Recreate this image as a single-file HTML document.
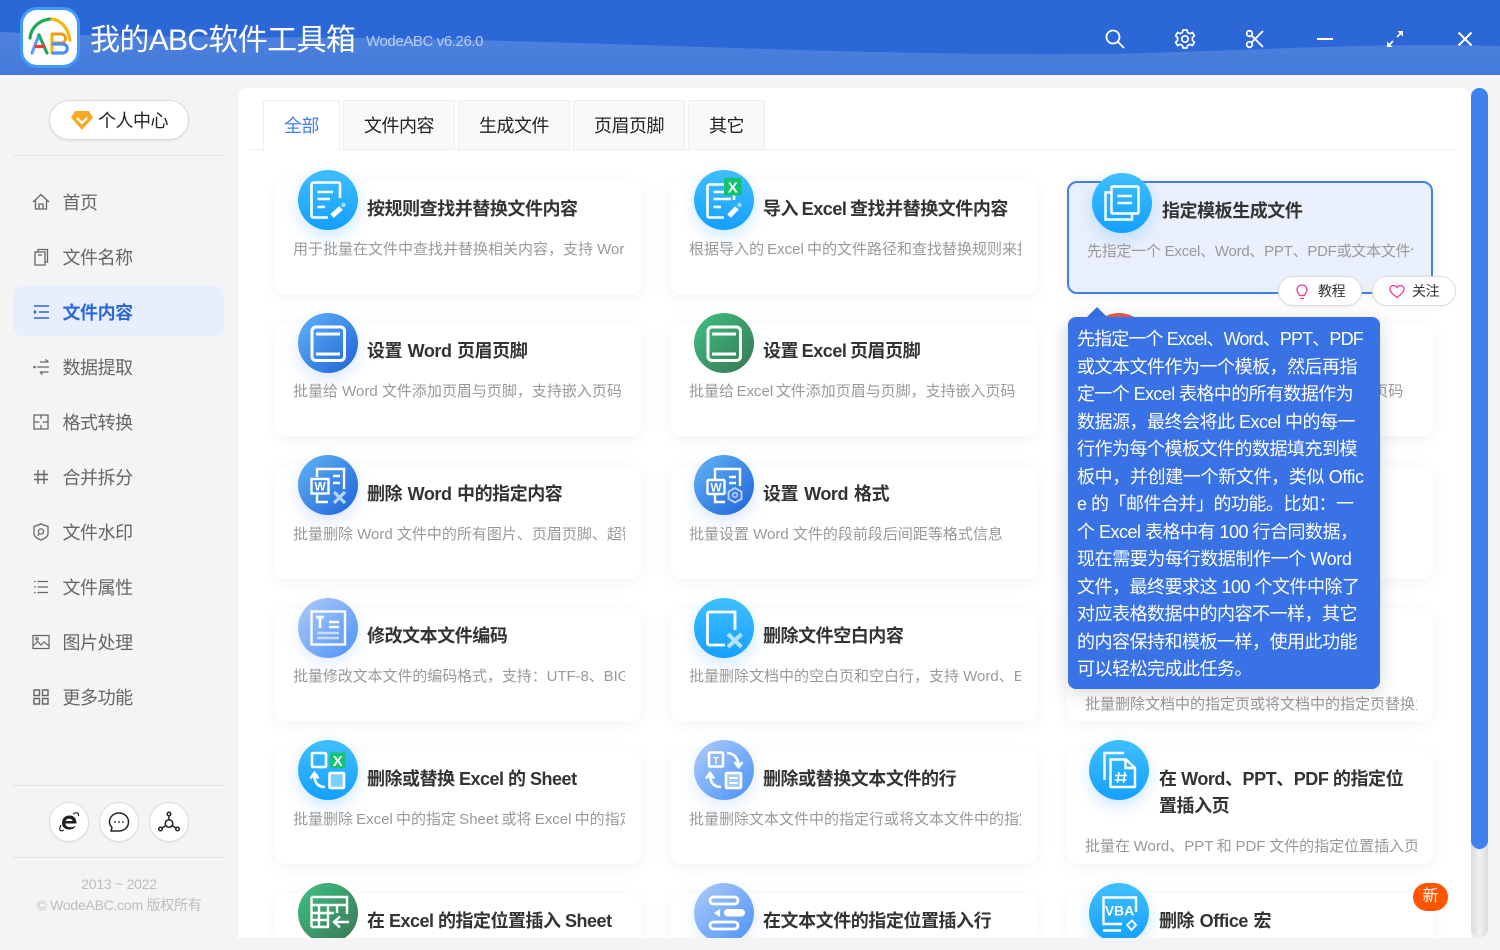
<!DOCTYPE html>
<html lang="zh-CN">
<head>
<meta charset="utf-8">
<title>我的ABC软件工具箱</title>
<style>
*{box-sizing:border-box;margin:0;padding:0}
html,body{width:1500px;height:950px;overflow:hidden;background:#f4f4f4;font-family:"Liberation Sans","Noto Sans CJK SC",sans-serif}
.hdr{position:absolute;left:0;top:0;width:1500px;height:75px;background:#2b67d7}
.hdr svg.wave{position:absolute;left:0;top:0}
.logo{position:absolute;left:20px;top:7px;width:60px;height:61px}
.apptitle{position:absolute;left:90px;top:19px;line-height:44px;font-size:30px;color:#fff;letter-spacing:-.65px;white-space:nowrap}
.ver{position:absolute;left:366px;top:32px;line-height:20px;font-size:15px;color:#b9cdf2;letter-spacing:-.4px;white-space:nowrap}
.wi{position:absolute;top:27px;width:24px;height:24px}
.pc{position:absolute;left:49px;top:100px;width:140px;height:40px;border:1px solid #ddd;border-radius:20px;background:#fff;box-shadow:0 1px 2px rgba(0,0,0,.08)}
.pc span{position:absolute;left:48px;top:1px;line-height:38px;font-size:18px;color:#222;letter-spacing:-.5px;white-space:nowrap}
.pc svg{position:absolute;left:20px;top:9px}
.hr{position:absolute;left:13px;width:212px;height:1px;background:#e3e3e3}
.vl{position:absolute;left:224px;top:170px;width:1px;height:553px;background:#f0f0f0}
.act{position:absolute;left:13px;top:286px;width:211px;height:50px;background:#e8effc;border-radius:10px}
.m{position:absolute;left:62.500px;line-height:28px;font-size:18px;color:#666;letter-spacing:-.45px;white-space:nowrap}
.m.on{color:#2b67d7;font-weight:700}
.mi{position:absolute;left:32px;width:18px;height:18px}
.cb{position:absolute;top:802px;width:40px;height:40px;border-radius:50%;background:#fff;border:1px solid #ddd;box-shadow:0 1px 2px rgba(0,0,0,.06)}
.cb svg{position:absolute;left:7px;top:7px}
.foot{position:absolute;left:0;width:238px;text-align:center;font-size:14px;line-height:20px;color:#bdbdbd;letter-spacing:-.25px;white-space:nowrap}
.panel{position:absolute;left:238px;top:88px;width:1233px;height:850px;background:#fff;border-radius:10px 10px 0 0;overflow:hidden}
.tab{position:absolute;top:12px;height:50px;background:#f9f9f9;border:1px solid #eee;border-bottom:0;text-align:center;line-height:50px;font-size:18px;color:#222;letter-spacing:-.5px;border-radius:2px 2px 0 0}
.tab.on{background:#fff;color:#3f80ef;height:51px;z-index:2}
.tline{position:absolute;left:12px;top:61px;width:1208px;height:1px;background:#eee}
.c{position:absolute;width:366px;height:113px;background:#fff;border-radius:10px;box-shadow:0 3px 16px rgba(0,0,0,.055)}
.ic{position:absolute;left:23px;top:-11px;width:60px;height:60px;border-radius:50%}
.ic svg{position:absolute;left:0;top:0}
.sky{background:linear-gradient(180deg,#40bfff,#14a0ff);box-shadow:0 6px 16px rgba(30,150,255,.22)}
.wd{background:linear-gradient(135deg,#62b4f6,#1e62d8);box-shadow:0 6px 16px rgba(40,110,230,.18)}
.gr{background:linear-gradient(135deg,#3dc283,#3a7652)}
.lb{background:linear-gradient(135deg,#aecbf8,#4a92fa);box-shadow:0 6px 16px rgba(70,140,250,.16)}
.t{position:absolute;left:92px;top:15px;width:260px;line-height:27px;font-size:18px;font-weight:700;color:#333;letter-spacing:-.45px;white-space:nowrap}
.d{position:absolute;left:18px;top:58px;width:332px;height:22px;line-height:22px;font-size:15px;color:#999;overflow:hidden;white-space:nowrap}
.e{height:112px}
.e .t{top:14px}
.e .d{top:57px}
.last{height:44px;border-radius:10px 10px 0 0}
.last .t{top:14px}
.sel{background:#e9f0fc;border:2px solid #3f80ef}
.sel .ic{left:23px;top:-10px}
.sel .t{left:93px;top:15px}
.sel .d{left:18px;top:58px;width:326px;letter-spacing:-.25px}
.btn{position:absolute;top:276px;width:84px;height:30px;border:1px solid #ddd;border-radius:15px;background:#fff;font-size:14px;line-height:28px;color:#333;letter-spacing:-.4px;box-shadow:0 1px 2px rgba(0,0,0,.05)}
.btn span{position:absolute;left:39px;top:0}
.btn svg{position:absolute;left:16px;top:7px}
.tip{position:absolute;left:830px;top:229px;width:312px;height:372px;background:#3872e4;border-radius:8px;color:#fff;font-size:18px;line-height:27.5px;letter-spacing:-.5px;padding:9px 9px 0;box-shadow:0 4px 20px rgba(0,0,0,.16);z-index:5}
.tip div{white-space:nowrap}
.arr{position:absolute;left:849px;top:219px;width:0;height:0;border-left:10px solid transparent;border-right:10px solid transparent;border-bottom:10px solid #3872e4;z-index:5}
.new{position:absolute;left:1175px;top:795px;width:35px;height:28px;border-radius:14px;background:#ff5500;color:#fff;font-size:16px;line-height:28px;text-align:center;z-index:6}
.track{position:absolute;left:1471px;top:88px;width:17px;height:850px;border-radius:9px;background:linear-gradient(90deg,#dcdcdc,#f0f0f0 50%,#dcdcdc)}
.thumb{position:absolute;left:1471px;top:88px;width:17px;height:761px;border-radius:9px;background:#3f80ef}
</style>
</head>
<body>

<div class="hdr">
<svg class="wave" width="1500" height="75" viewBox="0 0 1500 75"><defs><linearGradient id="wv" x1="0" y1="0" x2="0" y2="1"><stop offset="0" stop-color="#4f82dd"/><stop offset="1" stop-color="#4479da"/></linearGradient></defs><path d="M0 32C120 38 260 36 420 39C640 43 880 56 1090 54C1240 52 1360 42 1500 46V75H0Z" fill="url(#wv)"/></svg>
<svg class="logo" viewBox="0 0 60 61" fill="none" stroke-linecap="round"><rect x="0" y="0" width="60" height="61" rx="17" fill="#3f9bff"/><rect x="3" y="3" width="54" height="55" rx="14" fill="#fdfdff"/><path d="M10 31C11 20 20 13 30 12" stroke="#1ea85a" stroke-width="3.2"/><path d="M32 12C41 13 48 21 50 33" stroke="#f6b60d" stroke-width="3.2"/><path d="M12 46L19 28" stroke="#5aa0f5" stroke-width="3.2"/><path d="M19 28L27 46" stroke="#1ea85a" stroke-width="3.2"/><path d="M16 39.500H24" stroke="#ef3b36" stroke-width="3.200"/><path d="M32 27V46" stroke="#f6b60d" stroke-width="3.200"/><path d="M33 27H41C47 27 47 36 41 36H33" stroke="#f09a1a" stroke-width="3"/><path d="M33 37H42C49 37 49 46 42 46H33" stroke="#4d90f5" stroke-width="3.200"/></svg>
<div class="apptitle">我的ABC软件工具箱</div>
<div class="ver">WodeABC v6.26.0</div>
<svg class="wi" style="left:1103px" viewBox="0 0 24 24" fill="none" stroke="#fff" stroke-width="1.800"><circle cx="10" cy="10" r="6.500"/><path d="M15 15L21 21"/></svg>
<svg class="wi" style="left:1173px" viewBox="0 0 24 24" fill="none" stroke="#fff" stroke-width="1.700"><path d="M10 3h4l.7 2.600 2.300 1 2.400-1.200 2 3.400-2 1.800v2.800l2 1.800-2 3.400-2.400-1.200-2.300 1L14 21h-4l-.7-2.600-2.300-1-2.400 1.200-2-3.400 2-1.800v-2.800l-2-1.800 2-3.400L7 6.600l2.300-1z" stroke-linejoin="round"/><circle cx="12" cy="12" r="3.200"/></svg>
<svg class="wi" style="left:1243px" viewBox="0 0 24 24" fill="none" stroke="#fff" stroke-width="1.800"><circle cx="6.500" cy="6.500" r="2.800"/><circle cx="6.500" cy="17.500" r="2.800"/><path d="M8.500 8.500L20 20M8.500 15.500L20 4"/></svg>
<svg class="wi" style="left:1313px" viewBox="0 0 24 24" fill="none" stroke="#fff" stroke-width="2"><path d="M4 12H20"/></svg>
<svg class="wi" style="left:1383px" viewBox="0 0 24 24" fill="none" stroke="#fff" stroke-width="1.800"><path d="M6 18L10 14M14 10L18 6"/><path d="M4 20V14.500L9.500 20Z" fill="#fff" stroke="none"/><path d="M20 4V9.500L14.500 4Z" fill="#fff" stroke="none"/></svg>
<svg class="wi" style="left:1453px" viewBox="0 0 24 24" fill="none" stroke="#fff" stroke-width="2"><path d="M5.500 5.500L18.500 18.500M18.500 5.500L5.500 18.500"/></svg>
</div>

<div class="pc"><svg width="24" height="21" viewBox="0 0 24 21"><path d="M5 1H19L23 7.500L12 20L1 7.500Z" fill="#f9a825"/><path d="M7 8L12 13L17 8" fill="none" stroke="#fff" stroke-width="2.200"/></svg><span>个人中心</span></div>
<div class="hr" style="top:155px"></div>
<div class="vl"></div>
<div class="act"></div>

<svg class="mi" style="top:193px" viewBox="0 0 18 18" fill="none" stroke="#666" stroke-width="1.300"><path d="M1 9L9 1.500L17 9M3.500 7.500V16H14.500V7.500M7 16V11H11V16"/></svg>
<div class="m" style="top:188.500px">首页</div>
<svg class="mi" style="top:248px" viewBox="0 0 18 18" fill="none" stroke="#666" stroke-width="1.300"><path d="M3 4H13V17H3ZM6 4V1.500H15.500V14H13M6 7H10"/></svg>
<div class="m" style="top:243.500px">文件名称</div>
<svg class="mi" style="top:303px" viewBox="0 0 18 18" fill="none" stroke="#2b67d7" stroke-width="1.400"><path d="M2 3H17M7 9H17M2 15H17"/><path d="M2 6.500L5 9L2 11.500Z" fill="#2b67d7" stroke="none"/></svg>
<div class="m on" style="top:298.500px">文件内容</div>
<svg class="mi" style="top:358px" viewBox="0 0 18 18" fill="none" stroke="#666" stroke-width="1.300"><path d="M5 9H17M8 4H16.500M13.500 1.500L16.500 4M8 14H16.500M10.500 16.500L8 14"/><circle cx="2.500" cy="9" r="1.300" fill="#666" stroke="none"/></svg>
<div class="m" style="top:353.500px">数据提取</div>
<svg class="mi" style="top:413px" viewBox="0 0 18 18" fill="none" stroke="#666" stroke-width="1.300"><path d="M2 2H16V16H2ZM9 2V6M9 12V16M2 9H6M12 9H16M4.500 9H7.500M10.500 9H13.500"/></svg>
<div class="m" style="top:408.500px">格式转换</div>
<svg class="mi" style="top:468px" viewBox="0 0 18 18" fill="none" stroke="#666" stroke-width="1.400"><path d="M6 2V16M12 2V16M2 6.500H16M2 11.500H16"/></svg>
<div class="m" style="top:463.500px">合并拆分</div>
<svg class="mi" style="top:523px" viewBox="0 0 18 18" fill="none" stroke="#666" stroke-width="1.300"><path d="M9 1L16 3.500V11C16 13.500 12 16 9 17C6 16 2 13.500 2 11V3.500Z"/><circle cx="9" cy="8.500" r="2.600"/><path d="M7 11L5.500 12.500"/></svg>
<div class="m" style="top:518.500px">文件水印</div>
<svg class="mi" style="top:578px" viewBox="0 0 18 18" fill="none" stroke="#666" stroke-width="1.300"><path d="M5.500 3.500H16M5.500 9H16M5.500 14.500H16M2 3.500H3.500M2 9H3.500M2 14.500H3.500"/></svg>
<div class="m" style="top:573.500px">文件属性</div>
<svg class="mi" style="top:633px" viewBox="0 0 18 18" fill="none" stroke="#666" stroke-width="1.200"><path d="M1 2.500H17V15.500H1ZM1 13L5.500 8.500L9 12L12 9L17 13"/><circle cx="5" cy="5.800" r="1.200"/></svg>
<div class="m" style="top:628.500px">图片处理</div>
<svg class="mi" style="top:688px" viewBox="0 0 18 18" fill="none" stroke="#666" stroke-width="1.400"><path d="M2 2H7.500V7.500H2ZM10.500 2H16V7.500H10.500ZM2 10.500H7.500V16H2ZM10.500 10.500H16V16H10.500Z"/></svg>
<div class="m" style="top:683.500px">更多功能</div>

<div class="hr" style="top:785px"></div>
<div class="cb" style="left:49px"><svg width="24" height="24" viewBox="0 0 24 24" fill="none"><path d="M5 13C5 8.500 8 5.500 12.500 5.500C17 5.500 19.500 8.500 19.500 13.500H8.500C8.500 17 13 18.500 18.500 16C17.500 18.500 15 19.500 12 19.500C8 19.500 5 17 5 13ZM8.800 11H15.500C15.300 8 9 8 8.800 11Z" fill="#222"/><path d="M4 15C1.500 20 3 22 7 20M16 4C20 2 22 2.500 21.500 6" stroke="#222" stroke-width="1.200"/></svg></div>
<div class="cb" style="left:99px"><svg width="24" height="24" viewBox="0 0 24 24" fill="none" stroke="#222" stroke-width="1.500"><path d="M12 3C17.500 3 21.500 7 21.500 12C21.500 17 17.500 21 12 21H4L5 17.500C3.500 16 2.500 14 2.500 12C2.500 7 6.500 3 12 3Z" stroke-linejoin="round"/><circle cx="8" cy="12" r=".9" fill="#222" stroke="none"/><circle cx="12" cy="12" r=".9" fill="#222" stroke="none"/><circle cx="16" cy="12" r=".9" fill="#222" stroke="none"/></svg></div>
<div class="cb" style="left:149px"><svg width="24" height="24" viewBox="0 0 24 24" fill="none" stroke="#222" stroke-width="1.500"><circle cx="12" cy="13.500" r="3.800"/><circle cx="12" cy="4" r="1.800"/><circle cx="3.500" cy="19" r="1.800"/><circle cx="20.500" cy="19" r="1.800"/><path d="M12 6V9.700M5 18L8.800 15.500M19 18L15.200 15.500"/></svg></div>
<div class="hr" style="top:857px"></div>
<div class="foot" style="top:874px">2013 ~ 2022</div>
<div class="foot" style="top:895px">© WodeABC.com 版权所有</div>

<div class="panel">
<div class="tab on" style="left:25px;width:77px">全部</div>
<div class="tab" style="left:105px;width:112px">文件内容</div>
<div class="tab" style="left:220px;width:112px">生成文件</div>
<div class="tab" style="left:335px;width:112px">页眉页脚</div>
<div class="tab" style="left:450px;width:77px">其它</div>
<div class="tline"></div>

<!-- Column 1 -->
<div class="c" style="left:37px;top:93px">
<div class="ic sky"><svg width="60" height="60" viewBox="0 0 60 60" fill="none" stroke="#fff" stroke-width="2.600"><path d="M42 28V14.500a2 2 0 0 0-2-2H15.500a2 2 0 0 0-2 2V45.500a2 2 0 0 0 2 2H30"/><path d="M19.500 22H35M19.500 29H32M19.500 37H27"/><path d="M34 46L43 38" stroke-width="5"/><circle cx="45.500" cy="35" r="2.200" fill="#a8dcff" stroke="none"/></svg></div>
<div class="t">按规则查找并替换文件内容</div>
<div class="d">用于批量在文件中查找并替换相关内容，支持 Word、Excel、PPT</div>
</div>
<div class="c e" style="left:37px;top:236px">
<div class="ic wd"><svg width="60" height="60" viewBox="0 0 60 60" fill="none" stroke="#fff" stroke-width="3"><rect x="14" y="14" width="32.500" height="33.500" rx="4"/><path d="M18 21H42M18 41H42"/></svg></div>
<div class="t" style="word-spacing:1px">设置 Word 页眉页脚</div>
<div class="d">批量给 Word 文件添加页眉与页脚，支持嵌入页码</div>
</div>
<div class="c" style="left:37px;top:378px">
<div class="ic wd"><svg width="60" height="60" viewBox="0 0 60 60" fill="none" stroke="#fff" stroke-width="2.400"><path d="M19 22V14H46V34M19 38V47H30"/><rect x="13.500" y="24" width="17" height="14.500" fill="#3f8be6"/><path d="M35 21H42M35 28H42" stroke-width="2.600"/><path d="M36 37L47 48M47 37L36 48" stroke="#b9d5f7" stroke-width="3.200"/><text x="22" y="35.500" fill="#fff" stroke="none" font-size="12" font-weight="700" font-family="Liberation Sans" text-anchor="middle">W</text></svg></div>
<div class="t" style="word-spacing:1px">删除 Word 中的指定内容</div>
<div class="d">批量删除 Word 文件中的所有图片、页眉页脚、超链接等内容</div>
</div>
<div class="c e" style="left:37px;top:521px">
<div class="ic lb"><svg width="60" height="60" viewBox="0 0 60 60" fill="none" stroke="#fff" stroke-width="2.400"><rect x="13.500" y="13.500" width="33.500" height="33"/><path d="M18 19H26M22 19V30" stroke-width="2.800"/><path d="M31 24H41M31 29H41" stroke-width="2.400"/><path d="M19 35H41M19 40H41" stroke="#c8dcfb" stroke-width="2.400"/></svg></div>
<div class="t">修改文本文件编码</div>
<div class="d" style="letter-spacing:-.08px">批量修改文本文件的编码格式，支持：UTF-8、BIG5、GBK 等</div>
</div>
<div class="c" style="left:37px;top:663px">
<div class="ic sky"><svg width="60" height="60" viewBox="0 0 60 60" fill="none" stroke="#fff" stroke-width="2.600"><rect x="14" y="13" width="14" height="14" rx="1"/><rect x="32" y="12.500" width="15.500" height="15.500" rx="1" fill="#12c46f" stroke="none"/><rect x="31.500" y="33" width="14.500" height="15" rx="1" fill="#7fcfff"/><path d="M27 47C20 47 16.500 43 16.500 35M12.500 38.500L16.500 33L20.500 38.500"/><text x="39.700" y="26" fill="#fff" stroke="none" font-size="15" font-weight="700" font-family="Liberation Sans" text-anchor="middle">X</text></svg></div>
<div class="t" style="letter-spacing:-.5px">删除或替换 Excel 的 Sheet</div>
<div class="d" style="word-spacing:-1px">批量删除 Excel 中的指定 Sheet 或将 Excel 中的指定 Sheet 替换</div>
</div>
<div class="c last" style="left:37px;top:806px">
<div class="ic gr"><svg width="60" height="60" viewBox="0 0 60 60" fill="none" stroke="#fff" stroke-width="2.400"><path d="M13.500 44H31M13.500 14H49V31M13.500 14V44M13.500 22H49M13.500 30H36M13.500 37H31M21 22V44M30 22V44M39 22V30"/><path d="M36 39H51M42 33.500L36 39L42 44.500"/></svg></div>
<div class="t" style="letter-spacing:-.5px">在 Excel 的指定位置插入 Sheet</div>
</div>

<!-- Column 2 -->
<div class="c" style="left:433px;top:93px">
<div class="ic sky"><svg width="60" height="60" viewBox="0 0 60 60" fill="none" stroke="#fff" stroke-width="2.600"><path d="M40 30V14.500H15.500a2 2 0 0 0-2 2V45.500a2 2 0 0 0 2 2H30"/><path d="M19.500 22H31M19.500 29H37M19.500 37H27"/><path d="M35 46L43 38" stroke-width="5"/><circle cx="45.500" cy="35" r="2.200" fill="#a8dcff" stroke="none"/><rect x="30" y="8" width="17.500" height="17.500" rx="1" fill="#10c46f" stroke="none"/><text x="38.700" y="22.500" fill="#fff" stroke="none" font-size="15" font-weight="700" font-family="Liberation Sans" text-anchor="middle">X</text></svg></div>
<div class="t" style="word-spacing:-1px">导入 Excel 查找并替换文件内容</div>
<div class="d" style="word-spacing:-1px">根据导入的 Excel 中的文件路径和查找替换规则来批量查找并替换</div>
</div>
<div class="c e" style="left:433px;top:236px">
<div class="ic gr"><svg width="60" height="60" viewBox="0 0 60 60" fill="none" stroke="#fff" stroke-width="3"><rect x="14" y="14" width="32.500" height="33.500" rx="4"/><path d="M18 21H42M18 41H42"/></svg></div>
<div class="t" style="word-spacing:-1px">设置 Excel 页眉页脚</div>
<div class="d" style="word-spacing:-1.500px;letter-spacing:-.02px">批量给 Excel 文件添加页眉与页脚，支持嵌入页码</div>
</div>
<div class="c" style="left:433px;top:378px">
<div class="ic wd"><svg width="60" height="60" viewBox="0 0 60 60" fill="none" stroke="#fff" stroke-width="2.400"><path d="M21 24V14H46V31M21 39V47H31"/><rect x="13.500" y="25" width="17" height="14" rx="1" fill="#3f8be6"/><path d="M35 22H42M35 28H42" stroke-width="2.600"/><path d="M41 33L47.500 36.700V43.800L41 47.500L34.500 43.800V36.700Z" stroke="#c3d9f9" stroke-width="1.800"/><circle cx="41" cy="40" r="2.300" stroke="#c3d9f9" stroke-width="1.500"/><text x="22" y="36.500" fill="#fff" stroke="none" font-size="12" font-weight="700" font-family="Liberation Sans" text-anchor="middle">W</text></svg></div>
<div class="t" style="word-spacing:1.500px">设置 Word 格式</div>
<div class="d">批量设置 Word 文件的段前段后间距等格式信息</div>
</div>
<div class="c e" style="left:433px;top:521px">
<div class="ic sky"><svg width="60" height="60" viewBox="0 0 60 60" fill="none" stroke="#fff" stroke-width="2.800"><path d="M41 32V14H15.500a2 2 0 0 0-2 2V45a2 2 0 0 0 2 2H31"/><path d="M34 36L47.500 49M47.500 36L34 49" stroke="#b5e2ff" stroke-width="4"/></svg></div>
<div class="t">删除文件空白内容</div>
<div class="d">批量删除文档中的空白页和空白行，支持 Word、Excel、PPT</div>
</div>
<div class="c" style="left:433px;top:663px">
<div class="ic lb"><svg width="60" height="60" viewBox="0 0 60 60" fill="none" stroke="#fff" stroke-width="2.600"><rect x="15" y="12.500" width="14" height="14" rx="1"/><path d="M33 13C40 13 44 18 44.500 25M40.500 22L44.500 27L48.500 22"/><path d="M27 47C20 47 16.500 43 16 35.500M12 38.500L16 33L20 38.500"/><rect x="32" y="33" width="15" height="15" rx="1" fill="#a7c8fb"/><path d="M35.500 38H43.500M35.500 43H43.500" stroke-width="2"/><text x="22" y="24" fill="#fff" stroke="none" font-size="10" font-weight="700" font-family="Liberation Sans" text-anchor="middle">T</text></svg></div>
<div class="t">删除或替换文本文件的行</div>
<div class="d">批量删除文本文件中的指定行或将文本文件中的指定行替换为新内容</div>
</div>
<div class="c last" style="left:433px;top:806px">
<div class="ic lb"><svg width="60" height="60" viewBox="0 0 60 60" fill="none" stroke="#fff" stroke-width="2.800"><rect x="16" y="14" width="28" height="7" rx="3.500"/><rect x="16" y="39" width="28" height="7" rx="3.500"/><rect x="30" y="26" width="21" height="7.500" rx="3.700" fill="#fff" stroke="none"/><path d="M26 26V34L20 30Z" fill="#fff" stroke="none"/></svg></div>
<div class="t">在文本文件的指定位置插入行</div>
</div>

<!-- Column 3 -->
<div class="c sel" style="left:829px;top:93px">
<div class="ic sky"><svg width="60" height="60" viewBox="0 0 60 60" fill="none" stroke="#fff" stroke-width="2.400"><rect x="19.500" y="13.500" width="27" height="27" rx="1"/><path d="M19.500 19.500H13.500V46.500H40V40.500"/><path d="M25.500 23H40M25.500 30H40" stroke-width="2.600"/></svg></div>
<div class="t">指定模板生成文件</div>
<div class="d">先指定一个 Excel、Word、PPT、PDF或文本文件作为一个模板</div>
</div>
<div class="c e" style="left:829px;top:236px">
<div class="ic" style="left:22px;background:#e25c50"></div>
<div class="d" style="word-spacing:-2px">批量给 PPT 文件添加页眉与页脚，支持嵌入页码</div>
</div>
<div class="c" style="left:829px;top:378px"></div>
<div class="c e" style="left:829px;top:521px">
<div class="t" style="left:92px">在 Word、PPT、PDF</div>
<div class="d" style="top:85px;left:18px;width:332px">批量删除文档中的指定页或将文档中的指定页替换为新内容</div>
</div>
<div class="c" style="left:829px;top:663px">
<div class="ic sky" style="left:22px"><svg width="60" height="60" viewBox="0 0 60 60" fill="none" stroke="#fff" stroke-width="2.400"><path d="M15.500 40V13H35"/><path d="M21.500 19.500H37L46 28V47H21.500Z" stroke-linejoin="round"/><path d="M36.500 19.500V28H46"/><path d="M30 32L28.500 43M36 32L34.500 43M26 35.500H38M25.500 40H37.500" stroke-width="1.600"/></svg></div>
<div class="t">在 Word、PPT、PDF 的指定位<br>置插入页</div>
<div class="d" style="top:85px;left:18px;width:332px;word-spacing:-.5px">批量在 Word、PPT 和 PDF 文件的指定位置插入页。</div>
</div>
<div class="c last" style="left:829px;top:806px">
<div class="ic sky" style="left:22px"><svg width="60" height="60" viewBox="0 0 60 60" fill="none" stroke="#fff" stroke-width="2.400"><path d="M47 29V14.500H14.500V41H33"/><path d="M14 47.500H32"/><text x="30.500" y="32.500" fill="#fff" stroke="none" font-size="14" font-weight="700" font-family="Liberation Sans" text-anchor="middle">VBA</text><path d="M38 42L43 37.500L47 42L42.500 47Z" stroke-width="1.800"/></svg></div>
<div class="t" style="word-spacing:1px">删除 Office 宏</div>
</div>
<div class="new">新</div>

<div class="arr"></div>
<div class="tip"><div style="letter-spacing:-.87px">先指定一个 Excel、Word、PPT、PDF</div><div>或文本文件作为一个模板，然后再指</div><div style="letter-spacing:-.6px">定一个 Excel 表格中的所有数据作为</div><div>数据源，最终会将此 Excel 中的每一</div><div>行作为每个模板文件的数据填充到模</div><div style="letter-spacing:-.35px">板中，并创建一个新文件，类似 Offic</div><div>e 的「邮件合并」的功能。比如：一</div><div>个 Excel 表格中有 100 行合同数据，</div><div style="letter-spacing:-.4px">现在需要为每行数据制作一个 Word</div><div>文件，最终要求这 100 个文件中除了</div><div>对应表格数据中的内容不一样，其它</div><div>的内容保持和模板一样，使用此功能</div><div>可以轻松完成此任务。</div></div>
</div>

<div class="btn" style="left:1278px"><svg width="14" height="16" viewBox="0 0 14 16" fill="none" stroke="#ee3a9a" stroke-width="1.300"><path d="M7 1C10 1 12 3.200 12 5.800C12 8.300 9.800 9.300 9.500 11.500H4.500C4.200 9.300 2 8.300 2 5.800C2 3.200 4 1 7 1ZM5 14.500H9"/></svg><span>教程</span></div>
<div class="btn" style="left:1372px"><svg width="16" height="15" viewBox="0 0 16 15" fill="none" stroke="#ee3a9a" stroke-width="1.300"><path d="M8 13.500C3 10 1 7.500 1 5C1 2.800 2.800 1.500 4.500 1.500C6 1.500 7.300 2.300 8 3.500C8.700 2.300 10 1.500 11.500 1.500C13.200 1.500 15 2.800 15 5C15 7.500 13 10 8 13.500Z"/></svg><span>关注</span></div>

<div class="track"></div>
<div class="thumb"></div>
</body>
</html>
